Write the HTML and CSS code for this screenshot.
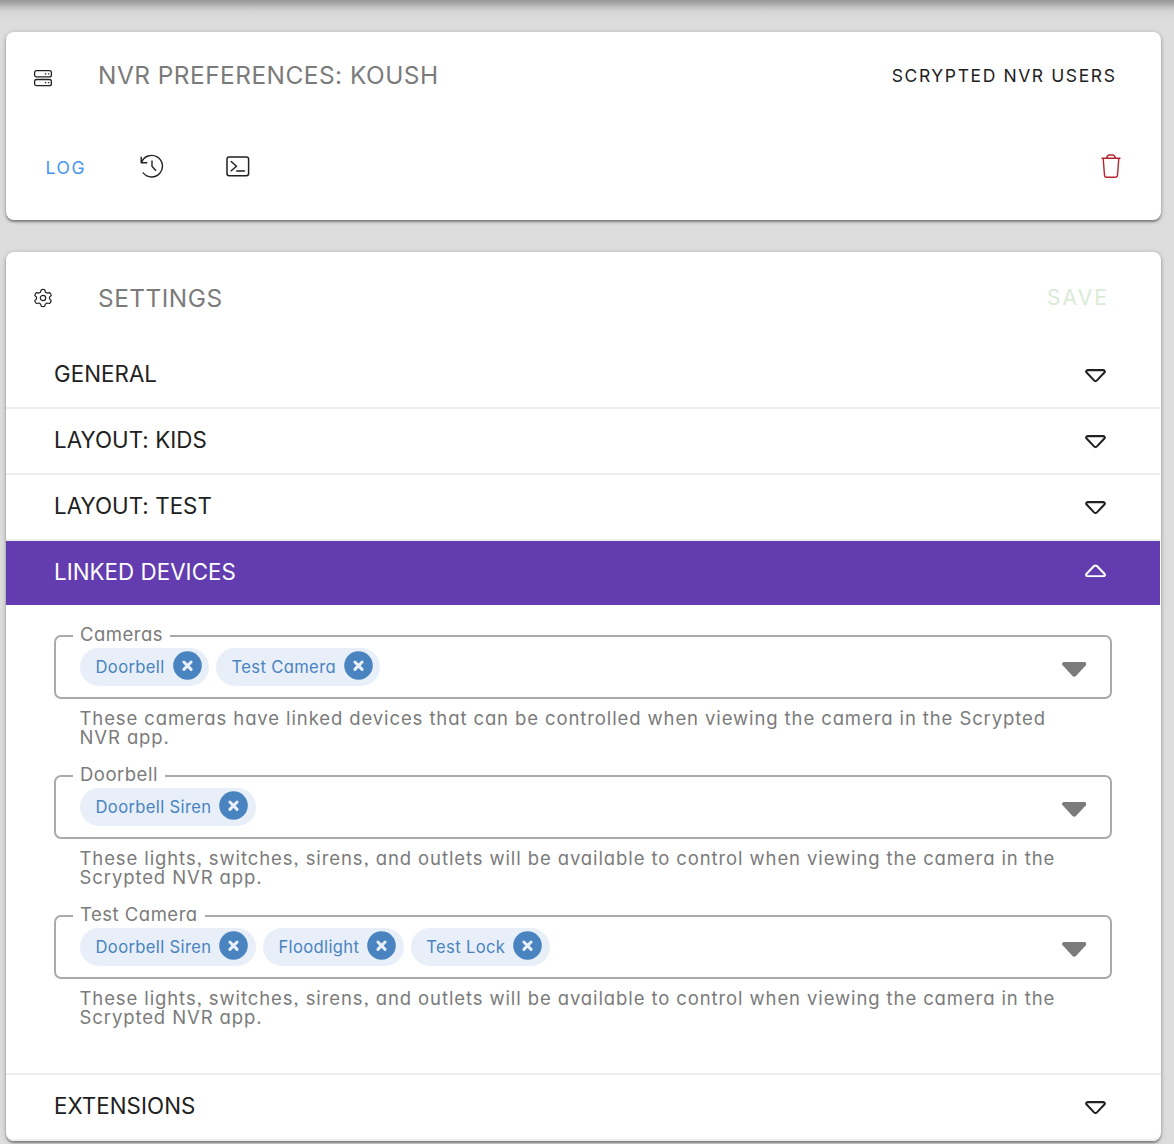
FILE: index.html
```html
<!DOCTYPE html>
<html lang="en">
<head>
<meta charset="utf-8">
<title>NVR Preferences</title>
<link rel="stylesheet" href="styles.css">
</head>
<body>
<svg class="defs" aria-hidden="true">
  <symbol id="outline-caret" viewBox="0 0 22 14"><path d="M2.8 1.2h16.4c1.5 0 2.1 1.6 1.1 2.5l-7.8 8.2c-.9.9-2.1.9-3 0L1.7 3.7C.7 2.8 1.3 1.2 2.8 1.2z" fill="none" stroke="currentColor" stroke-width="2.2"/></symbol>
  <symbol id="solid-caret" viewBox="0 0 24 15"><path d="M2 0h20c1.9 0 2.6 2 1.4 3.3l-9.700 10.400c-1 1-2.400 1-3.400 0L.6 3.300C-.6 2 .1 0 2 0z" fill="currentColor"/></symbol>
  <symbol id="close" viewBox="0 0 29 29"><circle cx="14.5" cy="14.5" r="14.3" fill="#4a84c0"/><path d="M10.900 11l7.200 7.400M18.100 11l-7.200 7.400" stroke="#e9f0f8" stroke-width="3" stroke-linecap="round"/></symbol>
</svg>
<main class="page">
  <section class="card device">
    <header class="card-head">
      <svg class="head-icon" viewBox="0 0 20 20" fill="none" stroke="currentColor" stroke-width="1.3"><rect x="1.6" y="2.7" width="16.8" height="6.2" rx="2"/><rect x="1.6" y="11.5" width="16.8" height="6.2" rx="2"/><path d="M11.8 5.800h1.4M14.9 5.800h1.4M11.8 14.600h1.4M14.9 14.600h1.4"/></svg>
      <h1 class="title">NVR PREFERENCES: KOUSH</h1>
      <a class="owner">SCRYPTED NVR USERS</a>
    </header>
    <div class="actions">
      <a class="log">LOG</a>
      <svg class="icon history" viewBox="0 0 24 24" fill="none" stroke="currentColor" stroke-width="1.4" stroke-linecap="round" stroke-linejoin="round"><path d="M1.2 3.2v5.6h5.6M1.5 8.5A10.8 10.8 0 1 1 3.2 18.9M12 7v5.3l3.6 4"/></svg>
      <svg class="icon" viewBox="0 0 24 24" fill="none" stroke="currentColor" stroke-width="1.5" stroke-linecap="round" stroke-linejoin="round"><rect x="1" y="2.9" width="21.6" height="18.9" rx="2.2"/><path d="M5.2 7.500l5.300 4.700-5.300 4.500M10.700 17h7.800"/></svg>
      <svg class="icon trash" viewBox="0 0 20 24" fill="none" stroke="currentColor" stroke-width="1.4" stroke-linecap="round" stroke-linejoin="round"><path d="M1 4.3h18M2.2 4.5l1.3 16.7q.2 2 2.2 2h8.6q2 0 2.2-2L17.8 4.5M5.7 4q.6-3 2.6-3h3.4q2 0 2.6 3"/></svg>
    </div>
  </section>
  <section class="card settings">
    <header class="card-head">
      <svg class="head-icon" viewBox="0 0 20 20" fill="none" stroke="currentColor" stroke-width="1.2" stroke-linejoin="round"><path d="M8.3 1.8q1.7-1 3.4 0l.8 2.4 1.5.9 2.5-.5q1.500 1 1.700 2.900L16.500 9.200v1.600l1.700 1.900q-.3 1.900-1.700 2.800l-2.500-.5-1.500.9-.8 2.400q-1.700.8-3.400 0l-.8-2.400-1.500-.9-2.500.5q-1.500-1-1.700-2.800l1.700-1.900V9.200L1.800 7.500q.2-1.900 1.700-2.900l2.500.5 1.500-.9z"/><circle cx="10" cy="10" r="2.7"/></svg>
      <h2 class="title">SETTINGS</h2>
      <a class="save">SAVE</a>
    </header>
    <div class="row"><span>GENERAL</span><svg class="caret"><use href="#outline-caret"/></svg></div>
    <div class="row"><span>LAYOUT: KIDS</span><svg class="caret"><use href="#outline-caret"/></svg></div>
    <div class="row"><span>LAYOUT: TEST</span><svg class="caret"><use href="#outline-caret"/></svg></div>
    <div class="row open"><span>LINKED DEVICES</span><svg class="caret"><use href="#outline-caret"/></svg></div>
    <div class="panel">
      <div class="field">
        <fieldset class="box"><legend>Cameras</legend>
          <div class="chips">
            <div class="chip"><span>Doorbell</span><svg><use href="#close"/></svg></div>
            <div class="chip"><span>Test Camera</span><svg><use href="#close"/></svg></div>
          </div>
          <svg class="drop"><use href="#solid-caret"/></svg>
        </fieldset>
        <p class="hint">These cameras have linked devices that can be controlled when viewing the camera in the Scrypted<br>NVR app.</p>
      </div>
      <div class="field">
        <fieldset class="box"><legend>Doorbell</legend>
          <div class="chips">
            <div class="chip"><span>Doorbell Siren</span><svg><use href="#close"/></svg></div>
          </div>
          <svg class="drop"><use href="#solid-caret"/></svg>
        </fieldset>
        <p class="hint">These lights, switches, sirens, and outlets will be available to control when viewing the camera in the<br>Scrypted NVR app.</p>
      </div>
      <div class="field">
        <fieldset class="box"><legend>Test Camera</legend>
          <div class="chips">
            <div class="chip"><span>Doorbell Siren</span><svg><use href="#close"/></svg></div>
            <div class="chip"><span>Floodlight</span><svg><use href="#close"/></svg></div>
            <div class="chip"><span>Test Lock</span><svg><use href="#close"/></svg></div>
          </div>
          <svg class="drop"><use href="#solid-caret"/></svg>
        </fieldset>
        <p class="hint">These lights, switches, sirens, and outlets will be available to control when viewing the camera in the<br>Scrypted NVR app.</p>
      </div>
    </div>
    <div class="row last"><span>EXTENSIONS</span><svg class="caret"><use href="#outline-caret"/></svg></div>
  </section>
</main>
</body>
</html>
```
FILE: styles.css
```css
* { box-sizing: border-box; }
body {
  margin: 0;
  background: #ddd;
  color: #212121;
  font-family: Inter, "Liberation Sans", sans-serif;
}
.defs { position: absolute; width: 0; height: 0; }
.page {
  display: flex;
  flex-direction: column;
  gap: 32px;
  height: 1144px;
  overflow: hidden;
  padding: 32px 13px 0 6px;
  background: linear-gradient(#979797, #a5a5a5 3px, #c0c0c0 7px, #d3d3d3 11px, #dadada 16px, #ddd 23px);
}
.card {
  flex: none;
  background: #fff;
  border-radius: 8px;
  box-shadow: 0 2px 2px rgba(0, 0, 0, .32), 0 1px 5px rgba(0, 0, 0, .24);
}
.device { height: 188px; }
.settings { height: 889px; }
.card-head { display: flex; align-items: center; height: 86px; padding: 0 44.5px 0 27px; }
.head-icon { width: 20px; height: 20px; margin: 6px 45px 0 0; }
.title { margin: 0; flex: 1; font-size: 24.4px; font-weight: 400; letter-spacing: .5px; color: #7b7b7b; }
.owner { font-size: 17.5px; letter-spacing: 1.6px; }
.actions { display: flex; align-items: center; height: 96px; padding: 0 40.5px 0 39.5px; }
.log { width: 94.5px; margin-top: 2px; font-size: 17.5px; letter-spacing: 1.6px; color: #4795f0; }
.icon { width: 24px; height: 24px; }
.history { margin-right: 62px; }
.trash { width: 20px; margin-left: auto; color: #b3252e; }
.settings .card-head { height: 91px; padding-right: 52px; }
.settings .head-icon { margin-top: 1px; }
.save { font-size: 21px; letter-spacing: 2.1px; color: #d9ead7; }
.row {
  display: flex;
  align-items: center;
  justify-content: space-between;
  height: 66px;
  margin-right: 1px;
  padding: 0 54px 0 48px;
  border-bottom: 2px solid #eee;
  font-size: 22.3px;
}
.row span { margin-top: -4px; letter-spacing: .06px; }
.caret { width: 21px; height: 13.4px; margin-top: 2px; }
.open { height: 64px; border: 0; background: #633daf; color: #fff; }
.open .caret { transform: rotate(180deg); margin-top: -4px; }
.panel { height: 470px; padding: 20px 49px 0 48px; border-bottom: 2px solid #eee; }
.field { height: 140px; }
.box {
  display: flex;
  justify-content: space-between;
  height: 74px;
  margin: 0;
  padding: 1px 24px 0 24px;
  border: 2px solid #aaa;
  border-radius: 7px;
  min-width: 0;
}
.box legend { height: 22px; margin-left: -7px; padding: 0 7px; font-size: 18.5px; line-height: 19px; letter-spacing: .5px; color: #7b7b7b; }
.box, .hint { font-feature-settings: "cv11", "ss03"; }
.chips { display: flex; gap: 7px; }
.chip { display: flex; align-items: center; height: 38px; padding: 0 7.5px 0 15.5px; gap: 8px; border-radius: 19px; background: #e8eff8; color: #4a84c0; font-size: 16.6px; letter-spacing: .35px; }
.chip svg { width: 29px; height: 29px; margin-top: -3px; }
.drop { width: 24.5px; height: 15.3px; margin-top: 14px; color: #7b7b7b; }
.hint { margin: 10px 0 0 25.500px; font-size: 18.5px; line-height: 19px; letter-spacing: .895px; color: #7b7b7b; white-space: nowrap; }
.last { height: 66px; border-radius: 0 0 8px 8px; }
```
